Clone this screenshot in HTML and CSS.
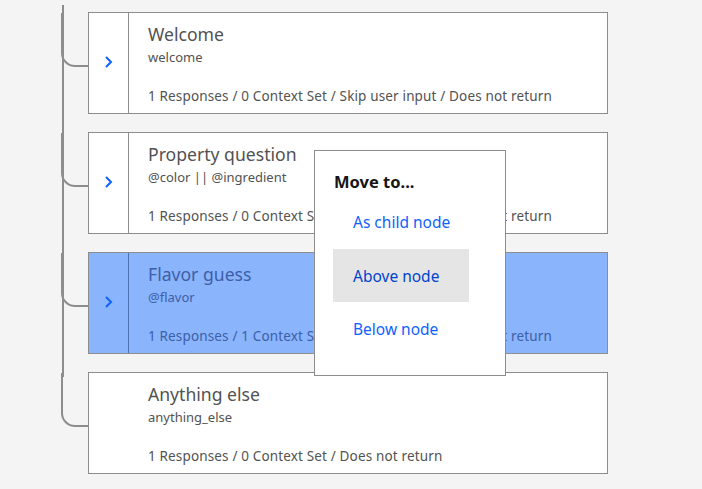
FILE: index.html
```html
<!DOCTYPE html>
<html>
<head>
<meta charset="utf-8">
<link rel="stylesheet" href="styles.css">
</head>
<body>
<div class="tree">
  <div class="node">
    <div class="card">
      <div class="toggle"><svg width="10" height="14" viewBox="0 0 10 14"><path d="M2 2 L7 7 L2 12" fill="none" stroke="#0f62fe" stroke-width="2"/></svg></div>
      <div class="body">
        <div class="title">Welcome</div>
        <div class="cond">welcome</div>
        <div class="meta">1 Responses / 0 Context Set / Skip user input / Does not return</div>
      </div>
    </div>
  </div>
  <div class="node">
    <div class="card">
      <div class="toggle"><svg width="10" height="14" viewBox="0 0 10 14"><path d="M2 2 L7 7 L2 12" fill="none" stroke="#0f62fe" stroke-width="2"/></svg></div>
      <div class="body">
        <div class="title">Property question</div>
        <div class="cond">@color || @ingredient</div>
        <div class="meta">1 Responses / 0 Context Set / Skip user input / Does not return</div>
      </div>
    </div>
  </div>
  <div class="node">
    <div class="card selected">
      <div class="toggle"><svg width="10" height="14" viewBox="0 0 10 14"><path d="M2 2 L7 7 L2 12" fill="none" stroke="#0f62fe" stroke-width="2"/></svg></div>
      <div class="body">
        <div class="title">Flavor guess</div>
        <div class="cond">@flavor</div>
        <div class="meta">1 Responses / 1 Context Set / Skip user input / Does not return</div>
      </div>
    </div>
  </div>
  <div class="node">
    <div class="card">
      <div class="toggle plain"></div>
      <div class="body">
        <div class="title">Anything else</div>
        <div class="cond">anything_else</div>
        <div class="meta">1 Responses / 0 Context Set / Does not return</div>
      </div>
    </div>
  </div>
</div>
<div class="menu">
  <div class="menu-title">Move to...</div>
  <div class="menu-item">As child node</div>
  <div class="menu-item active">Above node</div>
  <div class="menu-item">Below node</div>
</div>
</body>
</html>
```
FILE: styles.css
```css
html, body {
  margin: 0;
  padding: 0;
  background: #f4f4f4;
  font-family: "Noto Sans", "Open Sans", sans-serif;
  overflow: hidden;
  height: 489px;
}
.tree {
  position: relative;
  padding: 12px 0 0 88px;
  display: flex;
  flex-direction: column;
  gap: 18px;
  height: 477px;
  overflow: hidden;
}
.tree::before {
  content: "";
  position: absolute;
  left: 62px;
  top: 5px;
  height: 372px;
  width: 0;
  border-left: 2px solid #8d8d8d;
}
.node {
  position: relative;
}
.node::before {
  content: "";
  position: absolute;
  left: -27px;
  top: 1px;
  width: 25px;
  height: 52px;
  border-left: 2px solid #8d8d8d;
  border-bottom: 2px solid #8d8d8d;
  border-bottom-left-radius: 14px;
}
.card {
  width: 518px;
  height: 100px;
  border: 1px solid #8d8d8d;
  background: #ffffff;
  display: flex;
  box-sizing: content-box;
}
.card.selected {
  background: #8ab4fc;
}
.toggle {
  width: 40px;
  border-right: 1px solid #8d8d8d;
  display: flex;
  align-items: center;
  justify-content: center;
  padding-bottom: 2px;
  box-sizing: border-box;
}
.toggle.plain {
  border-right: none;
}
.selected .toggle {
  border-right-color: #4f6fb3;
}
.body {
  padding: 10px 0 0 19px;
  display: flex;
  flex-direction: column;
  color: #525252;
}
.selected .body {
  color: #3d5fa8;
}
.title {
  font-size: 17.6px;
  line-height: 22px;
}
.cond {
  font-size: 13px;
  line-height: 20px;
  margin-top: 2px;
}
.meta {
  font-size: 13.5px;
  letter-spacing: 0.15px;
  line-height: 18px;
  margin-top: 20px;
}
.menu {
  position: absolute;
  left: 314px;
  top: 150px;
  height: 224px;
  width: 154px;
  background: #ffffff;
  border: 1px solid #8d8d8d;
  padding: 0 18px;
  box-sizing: content-box;
}
.menu-title {
  font-weight: bold;
  font-size: 16.5px;
  color: #161616;
  padding: 21px 0 0 1px;
  line-height: 20px;
  height: 23px;
}
.menu-item {
  width: 136px;
  height: 54px;
  padding-left: 20px;
  box-sizing: border-box;
  display: flex;
  align-items: center;
  font-size: 15.5px;
  color: #0f62fe;
}
.menu-item.active {
  background: #e5e5e5;
  color: #0043ce;
  height: 53px;
}
```
